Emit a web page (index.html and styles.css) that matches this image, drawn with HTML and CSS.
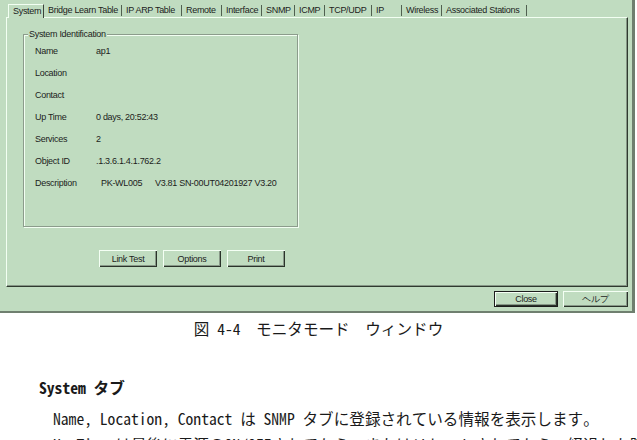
FILE: index.html
```html
<!DOCTYPE html>
<html>
  <head>
    <meta charset="UTF-8" />
    <title>Monitor Mode</title>
    <link rel="stylesheet" href="styles.css">
  </head>
  <body>
    <div class="window">
      <div class="tabs">
        <span class="tab active">System</span>
        <span class="tab">Bridge Learn Table</span>
        <span class="tab">IP ARP Table</span>
        <span class="tab">Remote</span>
        <span class="tab">Interface</span>
        <span class="tab">SNMP</span>
        <span class="tab">ICMP</span>
        <span class="tab">TCP/UDP</span>
        <span class="tab">IP</span>
        <span class="tab">Wireless</span>
        <span class="tab">Associated Stations</span>
      </div>

      <div class="panel">
        <div class="group">
          <span class="legend">System Identification</span>
          <dl class="info">
            <dt>Name</dt>
            <dd>ap1</dd>
            <dt>Location</dt>
            <dd></dd>
            <dt>Contact</dt>
            <dd></dd>
            <dt>Up Time</dt>
            <dd>0 days, 20:52:43</dd>
            <dt>Services</dt>
            <dd>2</dd>
            <dt>Object ID</dt>
            <dd>.1.3.6.1.4.1.762.2</dd>
            <dt>Description</dt>
            <dd><span class="model">PK-WL005</span>V3.81 SN-00UT04201927 V3.20</dd>
          </dl>
        </div>

        <div class="actions">
          <button class="btn">Link Test</button>
          <button class="btn">Options</button>
          <button class="btn">Print</button>
        </div>
      </div>

      <div class="footer">
        <button class="btn default">Close</button>
        <button class="btn help">ヘルプ</button>
      </div>
    </div>

    <div class="doc">
      <p class="caption">図 4-4　モニタモード　ウィンドウ</p>
      <h2>System タブ</h2>
      <div class="text">
        <p>Name, Location, Contact は SNMP タブに登録されている情報を表示します。</p>
        <p>Up Time は最後に電源のON/OFFされてから、またはリセットされてから、経過した時間です。</p>
      </div>
    </div>
  </body>
</html>
```

FILE: styles.css
```css
body {
  margin: 0;
  width: 637px;
  height: 440px;
  overflow: hidden;
  background-color: white;
}

.window {
  width: 635px;
  height: 313px;
  box-sizing: border-box;
  padding-top: 3px;
  background-color: #c0dcc0;
  border-right: 3px solid #6f7f6f;
  border-bottom: 2px solid #6f7f6f;
  font-family: "Liberation Sans", Arial, sans-serif;
  font-size: 9px;
  letter-spacing: -0.3px;
  color: #1c1c1c;
}

/* tab strip */
.tabs {
  display: grid;
  grid-template-columns: 36px 78px 60px 40px 40px 33px 30px 47px 30px 40px 85px;
  align-items: end;
  height: 14px;
  margin-left: 8px;
  position: relative;
  z-index: 1;
}

.tab {
  height: 11px;
  line-height: 11px;
  margin-bottom: 1px;
  padding-left: 4px;
  border-right: 1px solid #506050;
  white-space: nowrap;
  overflow: hidden;
  box-sizing: border-box;
}

.tab.active {
  height: 14px;
  margin-bottom: -1px;
  padding-top: 1px;
  background-color: #c0dcc0;
  border-top: 1px solid #f2fff2;
  border-left: 1px solid #f2fff2;
  border-right: 1px solid #3a443a;
}

.panel {
  width: 622px;
  height: 270px;
  margin-left: 6px;
  padding: 16px 0 0 16px;
  box-sizing: border-box;
  border-top: 1px solid #f2fff2;
  border-left: 1px solid #f2fff2;
  border-right: 1px solid #2f3a2f;
  border-bottom: 1px solid #2f3a2f;
  box-shadow: inset -1px -1px 0 #869686;
}

/* group box */
.group {
  position: relative;
  width: 275px;
  height: 193px;
  padding: 5px 0 0 11px;
  box-sizing: border-box;
  border: 1px solid #8c9c8c;
  box-shadow: inset 1px 1px 0 #f2fff2, 1px 1px 0 #f2fff2;
}

.legend {
  position: absolute;
  top: -6px;
  left: 4px;
  padding: 0 1px;
  line-height: 11px;
  background-color: #c0dcc0;
}

.info {
  display: grid;
  grid-template-columns: 61px auto;
  grid-auto-rows: 22px;
  align-items: center;
  margin: 0;
}

.info dd {
  margin: 0;
  white-space: nowrap;
}

.model {
  display: inline-block;
  width: 54px;
  margin-left: 5px;
}

/* buttons */
.actions {
  display: flex;
  gap: 6px;
  margin: 23px 0 0 76px;
}

.btn {
  width: 58px;
  height: 17px;
  padding: 0;
  border: none;
  box-sizing: border-box;
  font: inherit;
  letter-spacing: inherit;
  color: inherit;
  background-color: #c0dcc0;
  box-shadow: inset 1px 1px 0 #f4fff4, inset -1px -1px 0 #2a332a, inset -2px -2px 0 #889888;
}

.footer {
  display: flex;
  justify-content: flex-end;
  gap: 5px;
  margin-top: 4px;
  padding-right: 4px;
}

.footer .btn {
  height: 16px;
}

.btn.default {
  width: 64px;
  border: 1px solid #1c1c1c;
}

.btn.help {
  width: 65px;
}

/* document text below the screenshot */
.doc {
  font-family: "Noto Sans Mono CJK JP", "Noto Sans CJK JP", monospace;
  font-size: 15.6px;
  color: #1a1a1a;
}

.caption {
  margin: 5px 0 0;
  line-height: 20px;
  text-align: center;
}

.doc h2 {
  margin: 39px 0 0 39px;
  font-size: 15.6px;
  line-height: 20px;
  font-weight: bold;
}

.text {
  margin: 8px 0 0 53px;
}

.text p {
  margin: 0;
  line-height: 26px;
  white-space: nowrap;
}
```
